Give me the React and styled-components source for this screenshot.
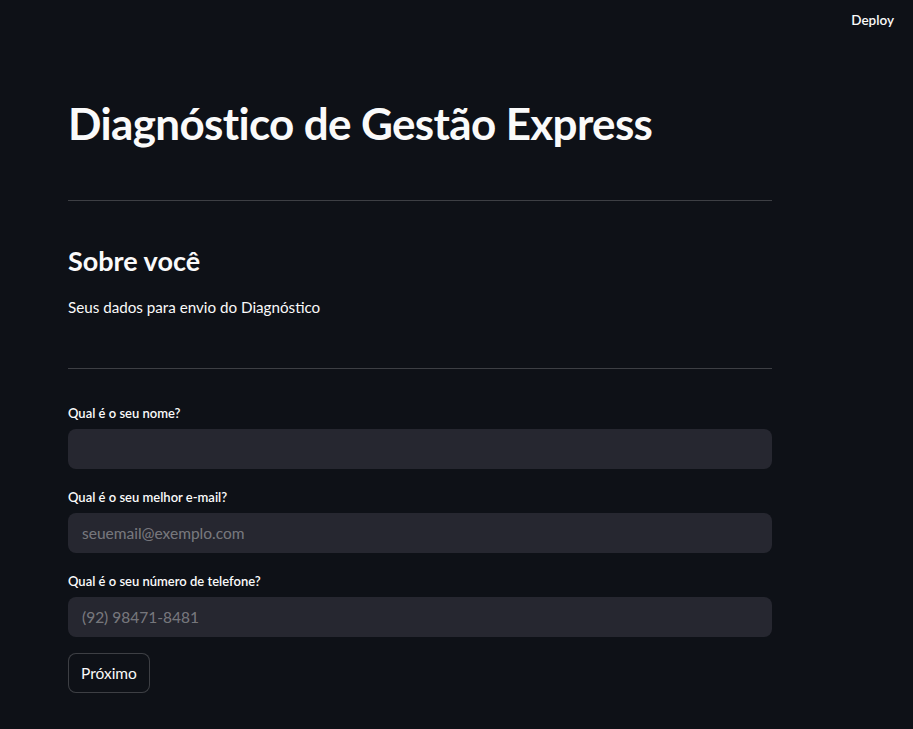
import styled, { createGlobalStyle } from 'styled-components'

const GlobalStyle = createGlobalStyle`
  html, body {
    margin: 0;
    padding: 0;
    background: #0e1117;
  }
  body {
    font-family: Lato, "Noto Sans", sans-serif;
    color: #fafafa;
  }
  * { box-sizing: border-box; }
`

export default function App() {
  return (
    <>
      <GlobalStyle />
      <Page>
        <Header>
          <DeployButton>Deploy</DeployButton>
        </Header>
        <Main>
          <Title>Diagnóstico de Gestão Express</Title>
          <Divider />
          <Subheader>Sobre você</Subheader>
          <Text>Seus dados para envio do Diagnóstico</Text>
          <Divider $top={48} />
          <Form>
            <Field>
              <Label>Qual é o seu nome?</Label>
              <InputBox>
                <Input type="text" />
              </InputBox>
            </Field>
            <Field>
              <Label>Qual é o seu melhor e-mail?</Label>
              <InputBox>
                <Input type="text" placeholder="seuemail@exemplo.com" />
              </InputBox>
            </Field>
            <Field>
              <Label>Qual é o seu número de telefone?</Label>
              <InputBox>
                <Input type="text" placeholder="(92) 98471-8481" />
              </InputBox>
            </Field>
            <Button>Próximo</Button>
          </Form>
        </Main>
      </Page>
    </>
  )
}

const Page = styled.div`
  min-height: 729px;
  background: #0e1117;
`

const Header = styled.header`
  height: 40px;
  display: flex;
  justify-content: flex-end;
  align-items: center;
  padding-right: 19px;
`

const DeployButton = styled.button`
  background: none;
  border: none;
  color: #fafafa;
  font-family: inherit;
  font-size: 13.5px;
  font-weight: 600;
  padding: 0;
  cursor: pointer;
`

const Main = styled.main`
  width: 704px;
  margin-left: 68px;
  padding-top: 57px;
  padding-bottom: 40px;
`

const Title = styled.h1`
  margin: 0;
  font-size: 44px;
  font-weight: 700;
  line-height: 1.2;
  letter-spacing: -0.65px;
  padding: 0 0 4px;
`

const Divider = styled.hr`
  margin: ${p => p.$top ?? 46}px 0 0;
  border: none;
  border-bottom: 1px solid rgba(250, 250, 250, 0.2);
  height: 0;
`

const Subheader = styled.h3`
  margin: 44px 0 0;
  font-size: 27px;
  font-weight: 700;
  line-height: 1.2;
`

const Text = styled.p`
  margin: 18px 0 0;
  font-size: 15.2px;
  line-height: 1.6;
`

const Form = styled.div`
  margin-top: 36px;
  display: flex;
  flex-direction: column;
  gap: 20px;
`

const Field = styled.div`
  display: flex;
  flex-direction: column;
  gap: 8px;
`

const Label = styled.label`
  font-size: 13px;
  font-weight: 600;
  line-height: 16px;
`

const InputBox = styled.div`
  height: 40px;
  display: flex;
  align-items: center;
  padding: 0 14px;
  border-radius: 8px;
  background: #262730;
`

const Input = styled.input`
  flex: 1;
  min-width: 0;
  height: 100%;
  padding: 0;
  border: none;
  background: transparent;
  color: #fafafa;
  font-family: inherit;
  font-size: 15.5px;
  outline: none;
  &::placeholder {
    color: rgba(250, 250, 250, 0.4);
  }
`

const Button = styled.button`
  align-self: flex-start;
  margin-top: -4px;
  height: 40px;
  padding: 0 12px;
  background: #0e1117;
  border: 1px solid rgba(250, 250, 250, 0.2);
  border-radius: 8px;
  color: #fafafa;
  font-family: inherit;
  font-size: 15.5px;
  cursor: pointer;
`
